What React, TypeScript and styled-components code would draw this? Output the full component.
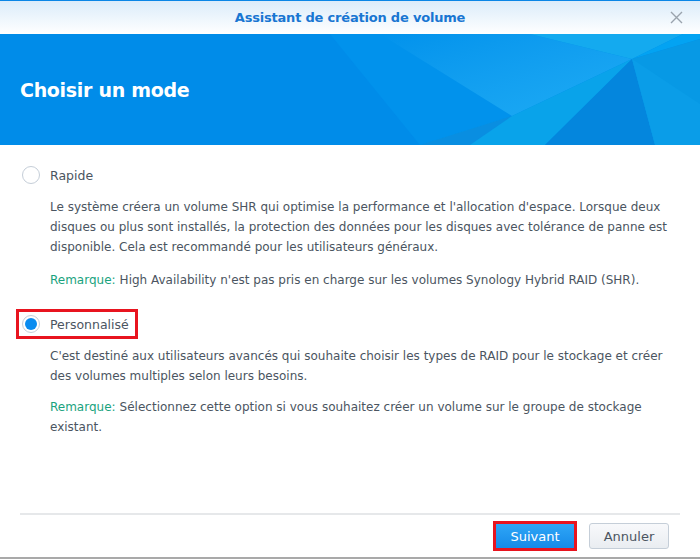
import React from "react";
import styled, { createGlobalStyle } from "styled-components";

const Global = createGlobalStyle`
  html, body { margin: 0; padding: 0; background: #ffffff; }
  body { font-family: "DejaVu Sans", Verdana, sans-serif; }
  * { box-sizing: border-box; }
`;

const Window = styled.div`
  width: 700px;
  height: 559px;
  display: flex;
  flex-direction: column;
  background: #ffffff;
  border-top: 1px solid #0a86e6;
  border-bottom: 2px solid #a9a9a9;
  overflow: hidden;
`;

const TitleBar = styled.div`
  height: 33px;
  flex: none;
  display: flex;
  align-items: center;
  justify-content: center;
  position: relative;
  background: linear-gradient(to bottom, #dbecfa 0%, #ffffff 100%);
`;

const Title = styled.div`
  font-size: 13px;
  font-weight: bold;
  color: #1976d2;
  letter-spacing: -0.2px;
`;

const Close = styled.button`
  position: absolute;
  right: 17px;
  top: 10px;
  width: 13px;
  height: 13px;
  padding: 0;
  border: none;
  background: none;
  display: flex;
  align-items: center;
  justify-content: center;
`;

const Banner = styled.div`
  height: 111px;
  flex: none;
  position: relative;
  display: flex;
  align-items: center;
  padding-left: 20px;
  background: #008de9;
  overflow: hidden;
`;

const BannerArt = styled.svg`
  position: absolute;
  left: 0;
  top: 0;
`;

const BannerTitle = styled.h1`
  position: relative;
  margin: 0;
  font-size: 19px;
  font-weight: bold;
  color: #ffffff;
  letter-spacing: -0.3px;
`;

const Content = styled.div`
  flex: 1;
  padding: 15px 20px 0 16px;
  color: #4b5561;
  font-size: 12px;
`;

const Option = styled.div<{ $gap?: number }>`
  margin-top: ${(p) => p.$gap ?? 0}px;
`;

const OptionHead = styled.label<{ $highlighted?: boolean }>`
  display: inline-flex;
  align-items: center;
  gap: 10px;
  height: 30px;
  padding: 0 6px 0 3px;
  border: 3px solid ${(p) => (p.$highlighted ? "#e8141f" : "transparent")};
  font-size: 12.5px;
  color: #4b5561;
`;

const Radio = styled.span<{ $checked?: boolean }>`
  width: 18px;
  height: 18px;
  border-radius: 50%;
  border: 1px solid #c5ced8;
  background: #ffffff;
  display: flex;
  align-items: center;
  justify-content: center;
  &::after {
    content: "";
    display: ${(p) => (p.$checked ? "block" : "none")};
    width: 12px;
    height: 12px;
    border-radius: 50%;
    background: #0a8cf0;
  }
`;

const Paragraph = styled.p<{ $top: number }>`
  margin: ${(p) => p.$top}px 0 0 34px;
  line-height: 20px;
  font-size: 12px;
  color: #4b5561;
`;

const Note = styled.span`
  color: #1aa37e;
  margin-right: 4px;
`;

const Footer = styled.div`
  flex: none;
  margin: 0 20px;
  border-top: 2px solid #e6e8ea;
  height: 44px;
  display: flex;
  align-items: center;
  justify-content: flex-end;
  gap: 12px;
  padding-right: 11px;
`;

const Button = styled.button<{ $primary?: boolean; $highlighted?: boolean }>`
  height: ${(p) => (p.$highlighted ? 30 : 26)}px;
  min-width: ${(p) => (p.$highlighted ? 84 : 80)}px;
  padding: 0 10px;
  font-family: "DejaVu Sans", Verdana, sans-serif;
  font-size: 13px;
  cursor: pointer;
  color: ${(p) => (p.$primary ? "#ffffff" : "#4b5561")};
  border: ${(p) =>
    p.$highlighted
      ? "3px solid #e8141f"
      : p.$primary
      ? "1px solid #1585e0"
      : "1px solid #c5ced8"};
  border-radius: ${(p) => (p.$highlighted ? 0 : 3)}px;
  background: ${(p) =>
    p.$primary
      ? "linear-gradient(to bottom, #2ea6f7 0%, #168ae8 100%)"
      : "linear-gradient(to bottom, #f8f9fb 0%, #e9edf1 100%)"};
`;

type OptionData = {
  label: string;
  checked: boolean;
  highlighted: boolean;
  description: string;
  note: string;
  gap: number;
  descTop: number;
  noteTop: number;
};

const options: OptionData[] = [
  {
    label: "Rapide",
    checked: false,
    highlighted: false,
    description:
      "Le système créera un volume SHR qui optimise la performance et l'allocation d'espace. Lorsque deux disques ou plus sont installés, la protection des données pour les disques avec tolérance de panne est disponible. Cela est recommandé pour les utilisateurs généraux.",
    note: "High Availability n'est pas pris en charge sur les volumes Synology Hybrid RAID (SHR).",
    gap: 0,
    descTop: 7,
    noteTop: 13,
  },
  {
    label: "Personnalisé",
    checked: true,
    highlighted: true,
    description:
      "C'est destiné aux utilisateurs avancés qui souhaite choisir les types de RAID pour le stockage et créer des volumes multiples selon leurs besoins.",
    note: "Sélectionnez cette option si vous souhaitez créer un volume sur le groupe de stockage existant.",
    gap: 19,
    descTop: 7,
    noteTop: 11,
  },
];

export default function App() {
  return (
    <>
      <Global />
      <Window>
        <TitleBar>
          <Title>Assistant de création de volume</Title>
          <Close aria-label="Fermer">
            <svg width="13" height="13" viewBox="0 0 13 13">
              <path d="M1 1L12 12M12 1L1 12" stroke="#9aa3ad" strokeWidth="1.4" />
            </svg>
          </Close>
        </TitleBar>
        <Banner>
          <BannerArt width="700" height="111" viewBox="0 0 700 111">
            <defs>
              <linearGradient id="glow" x1="0" y1="0" x2="1" y2="1">
                <stop offset="0" stopColor="#5fd0ff" stopOpacity="0" />
                <stop offset="1" stopColor="#3ccbff" stopOpacity="0.45" />
              </linearGradient>
            </defs>
            <polygon points="0,0 330,0 420,111 0,111" fill="#008ce9" />
            <polygon points="330,0 530,0 632,25 512,82 420,111" fill="#0192ec" />
            <polygon points="380,0 530,0 632,25 512,82" fill="url(#glow)" />
            <polygon points="530,0 683,0 632,25" fill="#14aaef" />
            <polygon points="683,0 700,0 700,5 632,25" fill="#03a3f2" />
            <polygon points="512,82 632,25 545,111 420,111" fill="#09a3ea" />
            <polygon points="632,25 545,111 655,111" fill="#0486dd" />
            <polygon points="632,25 700,5 700,70 655,111" fill="#0799e5" />
            <polygon points="632,25 700,70 700,111 655,111" fill="#0a9de8" />
            <polygon points="512,82 420,111 470,111" fill="#0a80da" opacity="0.6" />
          </BannerArt>
          <BannerTitle>Choisir un mode</BannerTitle>
        </Banner>
        <Content>
          {options.map((o) => (
            <Option key={o.label} $gap={o.gap}>
              <OptionHead $highlighted={o.highlighted}>
                <Radio $checked={o.checked} />
                {o.label}
              </OptionHead>
              <Paragraph $top={o.descTop}>{o.description}</Paragraph>
              <Paragraph $top={o.noteTop}>
                <Note>Remarque:</Note>
                {o.note}
              </Paragraph>
            </Option>
          ))}
        </Content>
        <Footer>
          <Button $primary $highlighted>
            Suivant
          </Button>
          <Button>Annuler</Button>
        </Footer>
      </Window>
    </>
  );
}
